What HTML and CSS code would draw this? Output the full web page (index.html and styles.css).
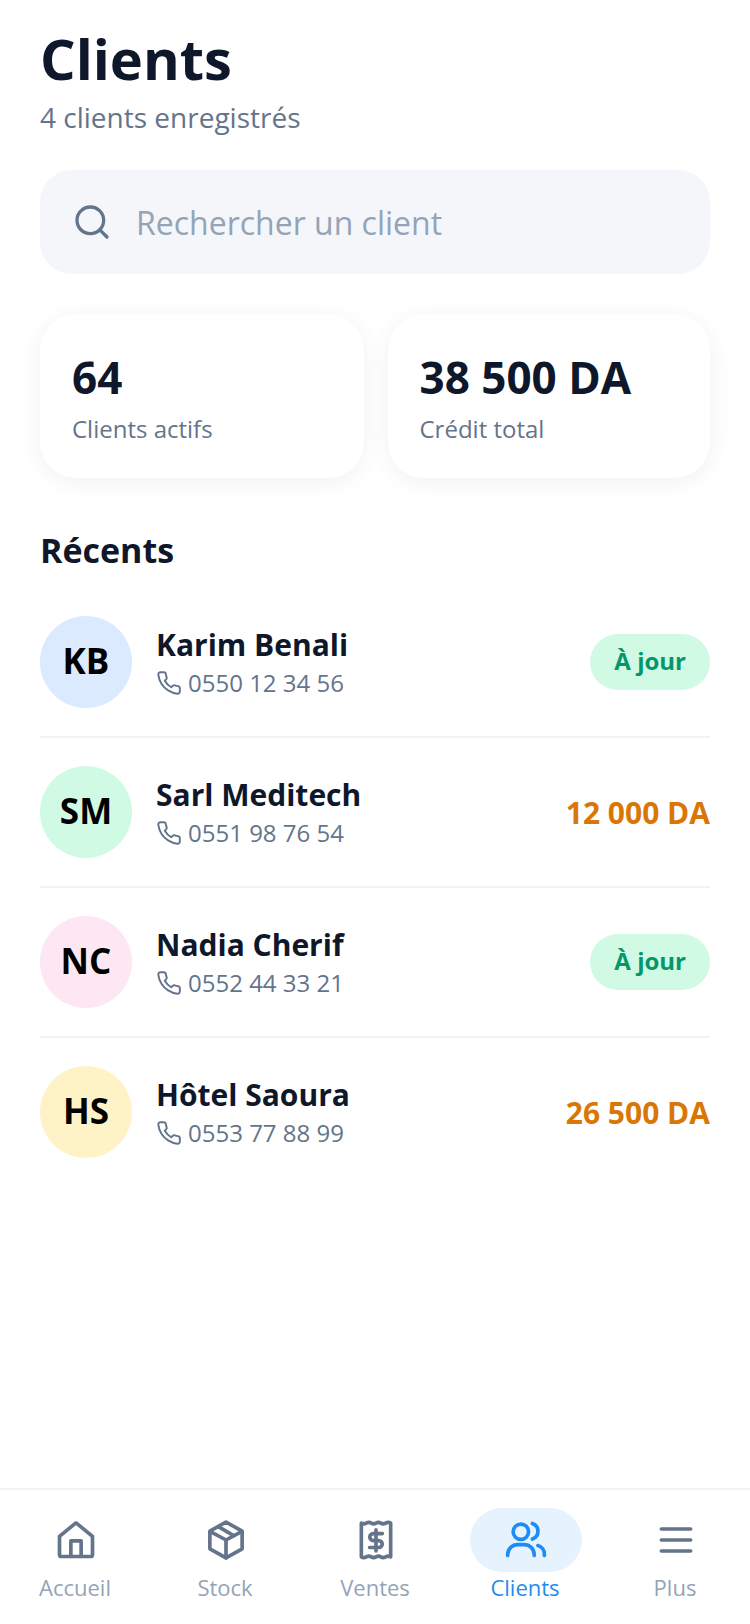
FILE: index.html
```html
<!DOCTYPE html>
<html lang="fr">
<head>
<meta charset="utf-8">
<title>Clients</title>
<link rel="stylesheet" href="styles.css">
</head>
<body>
<div class="app">
  <main class="main">
    <h1 class="title">Clients</h1>
    <p class="subtitle">4 clients enregistrés</p>
    <div class="search">
      <svg class="search-icon" viewBox="0 0 24 24"><circle cx="11" cy="11" r="8"/><path d="M21 21l-4.3-4.3"/></svg>
      <span class="search-text">Rechercher un client</span>
    </div>
    <section class="stats">
      <div class="card"><div class="card-value">64</div><div class="card-label">Clients actifs</div></div>
      <div class="card"><div class="card-value">38 500 DA</div><div class="card-label">Crédit total</div></div>
    </section>
    <h2 class="section-title">Récents</h2>
    <div class="list">
      <div class="row">
        <div class="avatar blue">KB</div>
        <div class="info"><div class="name">Karim Benali</div><div class="phone"><svg class="phone-icon" viewBox="0 0 24 24"><use href="#phone"/></svg>0550 12 34 56</div></div>
        <span class="badge">À jour</span>
      </div>
      <div class="row">
        <div class="avatar green">SM</div>
        <div class="info"><div class="name">Sarl Meditech</div><div class="phone"><svg class="phone-icon" viewBox="0 0 24 24"><use href="#phone"/></svg>0551 98 76 54</div></div>
        <span class="amount">12 000 DA</span>
      </div>
      <div class="row">
        <div class="avatar pink">NC</div>
        <div class="info"><div class="name">Nadia Cherif</div><div class="phone"><svg class="phone-icon" viewBox="0 0 24 24"><use href="#phone"/></svg>0552 44 33 21</div></div>
        <span class="badge">À jour</span>
      </div>
      <div class="row">
        <div class="avatar yellow">HS</div>
        <div class="info"><div class="name">Hôtel Saoura</div><div class="phone"><svg class="phone-icon" viewBox="0 0 24 24"><use href="#phone"/></svg>0553 77 88 99</div></div>
        <span class="amount">26 500 DA</span>
      </div>
    </div>
  </main>
  <nav class="nav">
    <div class="tab">
      <div class="tab-icon"><svg viewBox="0 0 24 24"><path d="M3 10 11.300 3.200a1 1 0 0 1 1.400 0L21 10v10a1 1 0 0 1-1 1H4a1 1 0 0 1-1-1z"/><path d="M9.200 21v-8.500h5.600V21"/></svg></div>
      <span class="tab-label">Accueil</span>
    </div>
    <div class="tab">
      <div class="tab-icon"><svg viewBox="0 0 24 24"><path d="M12 2.200l8.800 5v9.600L12 21.800l-8.800-5V7.200z"/><path d="M3.500 7.400 12 12l8.500-4.600"/><path d="M12 12v9.800"/><path d="M7.800 4.700l8.400 4.900"/></svg></div>
      <span class="tab-label">Stock</span>
    </div>
    <div class="tab">
      <div class="tab-icon"><svg viewBox="0 0 24 24"><path d="M4 2.800q1.300.8 2.700 0t2.700 0 2.600 0 2.600 0 2.700 0T20 2.800v18.400q-1.300-.8-2.700 0t-2.700 0-2.600 0-2.600 0-2.700 0T4 21.200z"/><path d="M15.500 8.500H10.500a1.900 1.900 0 0 0 0 3.800h3a1.900 1.900 0 0 1 0 3.800H8.500"/><path d="M12 6.500v11.500"/></svg></div>
      <span class="tab-label">Ventes</span>
    </div>
    <div class="tab active">
      <div class="tab-icon"><svg viewBox="0 0 24 24"><circle cx="9.200" cy="7.500" r="4.200"/><path d="M2 20.500V20a5.500 5.500 0 0 1 5.500-5.500H11a5.500 5.500 0 0 1 5.500 5.500v.5"/><path d="M15.500 3a4.500 4.500 0 0 1 0 8.500"/><path d="M18.500 15a4.800 4.800 0 0 1 3.500 4.600v.9"/></svg></div>
      <span class="tab-label">Clients</span>
    </div>
    <div class="tab">
      <div class="tab-icon"><svg viewBox="0 0 24 24"><path d="M4 6h16M4 12h16M4 18h16"/></svg></div>
      <span class="tab-label">Plus</span>
    </div>
  </nav>
</div>
<svg class="defs" aria-hidden="true"><defs><symbol id="phone" viewBox="0 0 24 24"><path d="M22 16.920v3a2 2 0 0 1-2.180 2 19.790 19.790 0 0 1-8.630-3.070 19.500 19.500 0 0 1-6-6 19.790 19.790 0 0 1-3.070-8.670A2 2 0 0 1 4.110 2h3a2 2 0 0 1 2 1.720 12.840 12.840 0 0 0 .7 2.810 2 2 0 0 1-.45 2.110L8.090 9.910a16 16 0 0 0 6 6l1.270-1.270a2 2 0 0 1 2.110-.45 12.840 12.840 0 0 0 2.810.7A2 2 0 0 1 22 16.920z"/></symbol></defs></svg>
</body>
</html>
```
FILE: styles.css
```css
* { box-sizing: border-box; }
html, body { margin: 0; padding: 0; background: #fff; }
body { font-family: "Open Sans", sans-serif; color: #0f172a; }
.defs { display: none; }
.app { width: 750px; height: 1624px; display: flex; flex-direction: column; overflow: hidden; }
.main { flex: 1; padding: 22px 40px 0; min-height: 0; }
.title { margin: 0; font-size: 56px; line-height: 72px; font-weight: 700; color: #0f172a; }
.subtitle { margin: 3px 0 0; font-size: 28px; line-height: 40px; color: #64748b; }
.search { margin-top: 33px; height: 104px; background: #f4f6fa; border-radius: 32px; display: flex; align-items: center; padding: 0 32px; gap: 24px; }
.search-icon { width: 40px; height: 40px; fill: none; stroke: #64748b; stroke-width: 2; stroke-linecap: round; stroke-linejoin: round; flex: none; }
.search-text { font-size: 32px; line-height: 44px; padding-top: 2px; color: #94a3b8; }
.stats { margin-top: 40px; display: grid; grid-template-columns: 323.5px 322.5px; gap: 24px; }
.card { height: 164px; background: #fff; border-radius: 36px; padding: 33px 32px; box-shadow: 0 4px 24px rgba(15, 23, 42, 0.06); }
.card-value { font-size: 44px; line-height: 60px; font-weight: 700; color: #0f172a; }
.card-label { margin-top: 4px; font-size: 24px; line-height: 36px; color: #64748b; }
.section-title { margin: 49px 0 0; font-size: 34px; line-height: 46px; font-weight: 700; color: #0f172a; }
.list { margin-top: 15px; }
.row { display: flex; align-items: center; gap: 24px; padding: 28px 0; border-bottom: 2px solid #f1f2f6; }
.row:last-child { border-bottom: 0; }
.avatar { width: 92px; height: 92px; padding-bottom: 4px; border-radius: 50%; display: flex; align-items: center; justify-content: center; font-size: 35px; font-weight: 700; color: #000; flex: none; }
.blue { background: #dbeafe; }
.green { background: #d1fae5; }
.pink { background: #fce7f3; }
.yellow { background: #fef3c7; }
.info { flex: 1; min-width: 0; padding-top: 2px; }
.name { font-size: 30px; line-height: 40px; font-weight: 700; color: #0f172a; }
.phone { display: flex; align-items: center; gap: 6px; font-size: 24px; line-height: 36px; color: #64748b; }
.phone-icon { width: 26px; height: 26px; fill: none; stroke: #64748b; stroke-width: 1.8; stroke-linecap: round; stroke-linejoin: round; flex: none; }
.badge { height: 56px; padding: 0 24px 4px; border-radius: 28px; background: #d1fae5; color: #059669; font-size: 24px; font-weight: 700; display: flex; align-items: center; }
.amount { font-size: 30px; font-weight: 700; color: #d97706; }
.nav { height: 136px; border-top: 2px solid #f1f2f6; display: flex; flex: none; padding-top: 18px; background: #fff; }
.tab { flex: 1; display: flex; flex-direction: column; align-items: center; }
.tab-icon { width: 112px; height: 64px; margin-left: 2px; margin-bottom: -1px; border-radius: 32px; display: flex; align-items: center; justify-content: center; }
.tab-icon svg { width: 44px; height: 44px; fill: none; stroke: #64748b; stroke-width: 2; stroke-linecap: round; stroke-linejoin: round; }
.tab-label { font-size: 22px; line-height: 32px; color: #94a3b8; }
.active .tab-icon { background: #e6f3ff; }
.active .tab-icon svg { stroke: #1e8cf5; }
.active .tab-label { color: #1e8cf5; }
```
